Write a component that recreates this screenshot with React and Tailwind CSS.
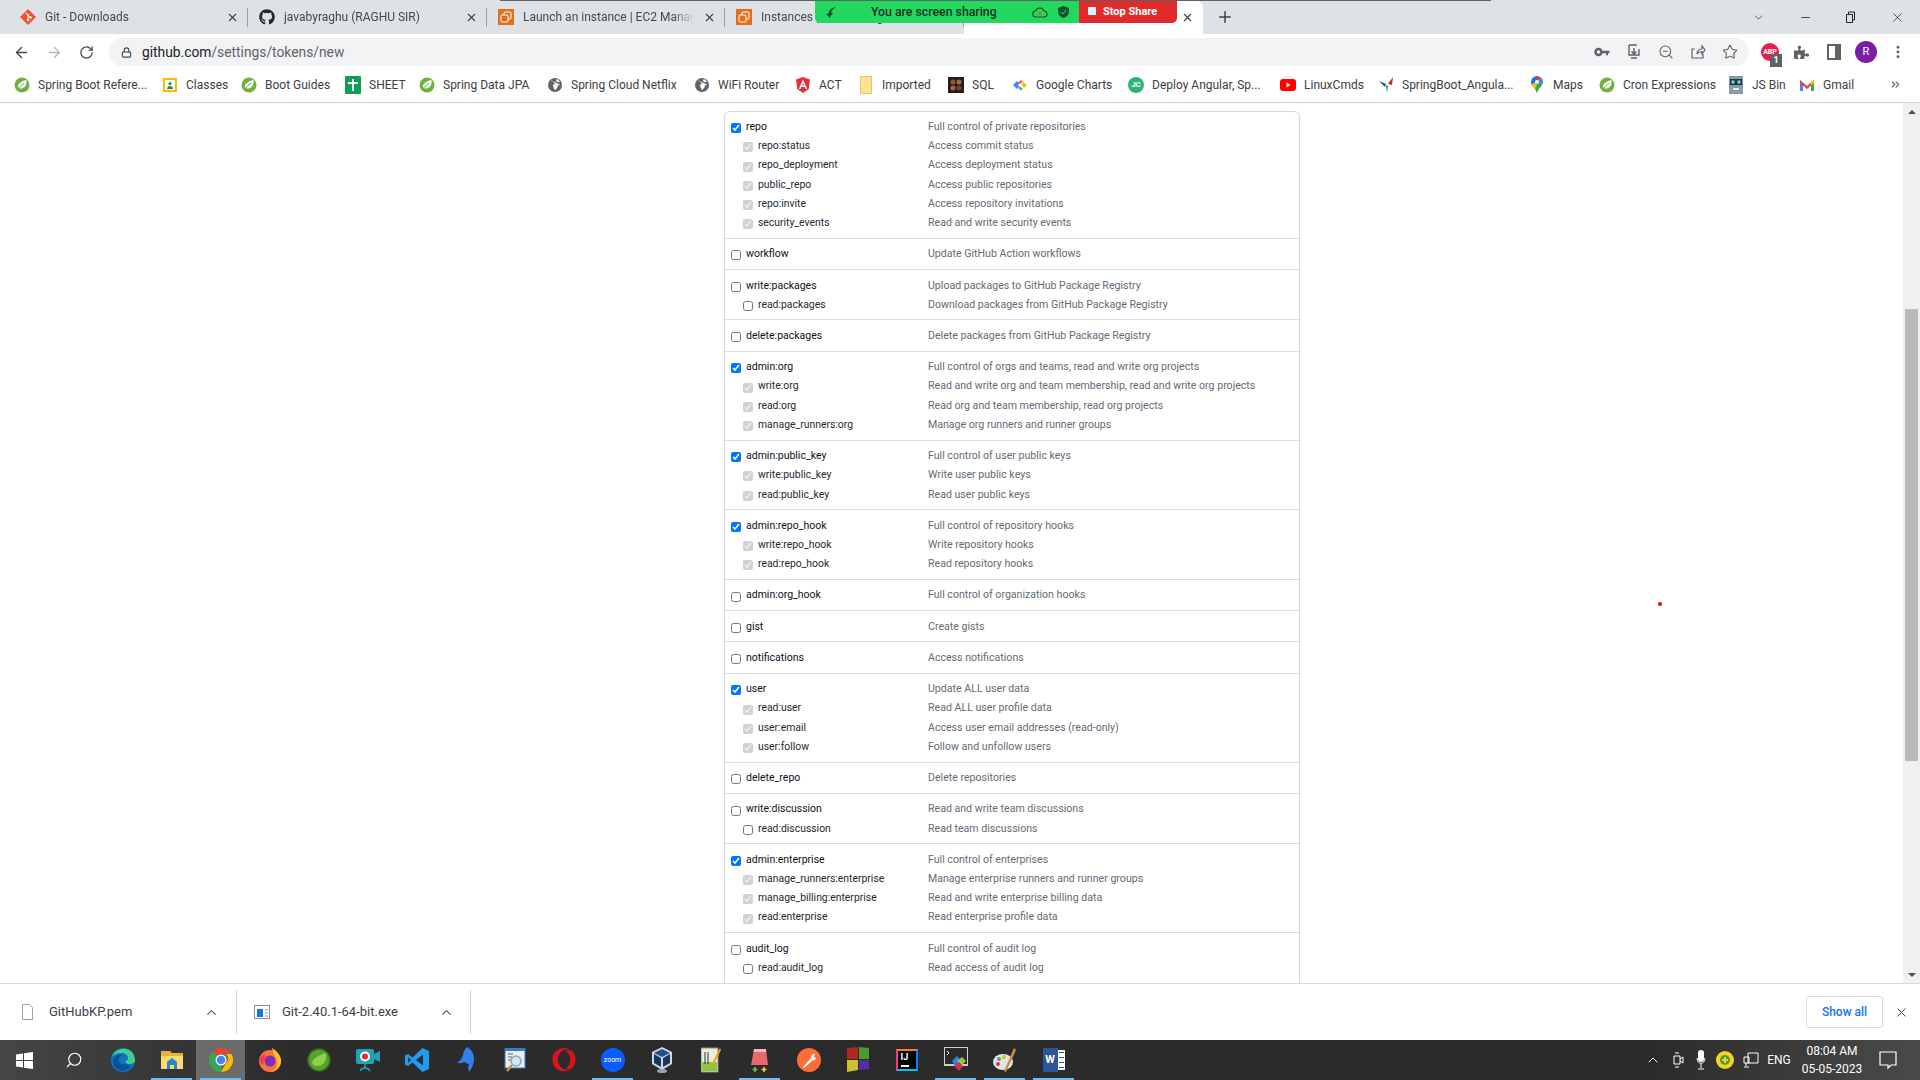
import React from 'react';
import {
  ArrowLeft, ArrowRight, RotateCw, Lock, ZoomOut, Star, MoreVertical, ChevronUp, ChevronDown,
  Minus, X, Plus, ChevronsRight, Search,
} from 'lucide-react';
import { FaGithub, FaPuzzlePiece, FaOpera } from 'react-icons/fa';

const Leaf = ({ size = 16 }) => (
  <svg width={size} height={size} viewBox="0 0 16 16" className="shrink-0">
    <circle cx="8" cy="8" r="7.5" fill="#6db33f" />
    <path d="M12.5 3c.5 4-1 8-5 8.500-1.500.2-3-.5-3.500-1.500C3.500 7 7 4.500 12.500 3z" fill="#fff" />
    <path d="M4 12.500C6 9 8 7.500 10.500 6" stroke="#6db33f" strokeWidth="1" fill="none" />
  </svg>
);

const Globe = () => (
  <svg width="16" height="16" viewBox="0 0 16 16" className="shrink-0">
    <circle cx="8" cy="8" r="7" fill="#5f6368" />
    <path d="M4 3.500l3 1.500 1 2-2 1 1 3 1 2 2-2 1-3 2-.500M10 2l-1 2 2 1 2-.500" fill="#fff" stroke="#fff" strokeWidth=".4" />
  </svg>
);

const Classes = () => (
  <svg width="16" height="16" viewBox="0 0 16 16" className="shrink-0">
    <rect x="1" y="1" width="14" height="14" fill="#fbbc04" />
    <rect x="3" y="3" width="10" height="10" fill="#fff" />
    <circle cx="8" cy="6.500" r="1.500" fill="#1e8e3e" />
    <path d="M5 12c0-2 1.500-3 3-3s3 1 3 3z" fill="#1e8e3e" />
  </svg>
);

const Sheet = () => (
  <svg width="16" height="18" viewBox="0 0 16 18" className="shrink-0">
    <rect width="16" height="18" rx="1" fill="#0f9d58" />
    <path d="M8 3v12M3 7h10" stroke="#fff" strokeWidth="1.800" />
  </svg>
);

const Angular = () => (
  <svg width="16" height="16" viewBox="0 0 16 16" className="shrink-0">
    <path d="M8 0l7 2.500-1.200 9.500L8 16l-5.800-4L1 2.500z" fill="#e23237" />
    <path d="M8 2.500L3.800 12h1.600l.8-2h3.600l.8 2h1.600zM7 8.500l1-2.500 1 2.500z" fill="#fff" />
  </svg>
);

const Folder = () => <span className="w-[12px] h-[18px] mx-[2px] shrink-0 bg-[#fde293] border border-[#e8c76a]" />;

const SqlIcon = () => (
  <svg width="16" height="16" viewBox="0 0 16 16" className="shrink-0">
    <rect width="16" height="16" fill="#2a1d17" />
    <circle cx="5" cy="5" r="2.500" fill="#8a5a3c" />
    <circle cx="11" cy="5" r="2.500" fill="#a06c48" />
    <circle cx="5" cy="11" r="2.500" fill="#a06c48" />
    <circle cx="11" cy="11" r="2.500" fill="#6e4630" />
  </svg>
);

const Charts = () => (
  <svg width="16" height="16" viewBox="0 0 16 16" className="shrink-0">
    <path d="M1 8l4-4 2.500 2.500L6 8l1.500 1.500L5 12z" fill="#4285f4" />
    <path d="M6.500 5.500L9 3l1.500 1.500L8 7z" fill="#ea4335" />
    <path d="M11 4.500L15 8l-3 3-2.500-3z" fill="#fbbc04" />
    <path d="M8 9.500L10.500 12 9 13.500 6.500 11z" fill="#34a853" />
  </svg>
);

const Deploy = () => (
  <span className="w-[16px] h-[16px] shrink-0 rounded-full bg-[#2bb673] text-white text-[8px] font-bold leading-[16px] text-center">JC</span>
);

const Youtube = () => (
  <svg width="16" height="16" viewBox="0 0 16 16" className="shrink-0">
    <rect y="2" width="16" height="12" rx="3" fill="#ff0000" />
    <path d="M6.500 5.500v5l4-2.500z" fill="#fff" />
  </svg>
);

const ArrowLogo = () => (
  <svg width="16" height="16" viewBox="0 0 16 16" className="shrink-0">
    <path d="M15 0l-5 7 4 1z" fill="#c62828" />
    <path d="M1 4l7 3-1 3z" fill="#0d5c7a" />
    <path d="M8 8l2 1-1 7z" fill="#1f7a8c" />
  </svg>
);

const Maps = () => (
  <svg width="16" height="18" viewBox="0 0 16 18" className="shrink-0">
    <path d="M8 0a6 6 0 00-6 6c0 1 .3 2 .8 2.800L8 5z" fill="#1a73e8" />
    <path d="M8 0c2 0 3.500 1 4.500 2L8 6z" fill="#ea4335" />
    <path d="M12.500 2A6 6 0 0114 6c0 1-.3 2-.8 2.800L8 6z" fill="#4285f4" />
    <path d="M2.800 8.800L8 5l5.200 3.800c-1.200 2-4.200 4-5.200 9-1-5-4-7-5.200-9z" fill="#34a853" />
    <path d="M2.800 8.800L6 6.500 8 9.500l-2 3.500c-1-1.500-2.400-2.800-3.200-4.200z" fill="#fbbc04" />
    <circle cx="8" cy="6" r="2" fill="#fff" />
  </svg>
);

const JsBin = () => (
  <svg width="14" height="18" viewBox="0 0 14 18" className="shrink-0 mx-[1px]">
    <rect width="14" height="18" fill="#8a9aa5" />
    <rect x="1" y="3" width="12" height="6" fill="#24343f" />
    <rect x="2.500" y="4.500" width="3" height="3" fill="#7fd7f2" />
    <rect x="8.500" y="4.500" width="3" height="3" fill="#7fd7f2" />
    <rect x="4" y="12" width="6" height="2" fill="#dfe5e8" />
  </svg>
);

const Gmail = () => (
  <svg width="16" height="16" viewBox="0 0 16 16" className="shrink-0">
    <path d="M1 3v11h3V7z" fill="#4285f4" />
    <path d="M15 3v11h-3V7z" fill="#34a853" />
    <path d="M1 3l7 6 7-6v3L8 12 1 6z" fill="#ea4335" />
    <path d="M12 4.500L15 3v3l-3 2.500z" fill="#fbbc04" />
  </svg>
);

const bookmarks = [
  { icon: <Leaf />, label: 'Spring Boot Refere...', w: 'w-[148px]' },
  { icon: <Classes />, label: 'Classes', w: 'w-[79px]' },
  { icon: <Leaf />, label: 'Boot Guides', w: 'w-[104px]' },
  { icon: <Sheet />, label: 'SHEET', w: 'w-[74px]' },
  { icon: <Leaf />, label: 'Spring Data JPA', w: 'w-[128px]' },
  { icon: <Globe />, label: 'Spring Cloud Netflix', w: 'w-[147px]' },
  { icon: <Globe />, label: 'WiFi Router', w: 'w-[101px]' },
  { icon: <Angular />, label: 'ACT', w: 'w-[63px]' },
  { icon: <Folder />, label: 'Imported', w: 'w-[90px]' },
  { icon: <SqlIcon />, label: 'SQL', w: 'w-[64px]' },
  { icon: <Charts />, label: 'Google Charts', w: 'w-[116px]' },
  { icon: <Deploy />, label: 'Deploy Angular, Sp...', w: 'w-[152px]' },
  { icon: <Youtube />, label: 'LinuxCmds', w: 'w-[98px]' },
  { icon: <ArrowLogo />, label: 'SpringBoot_Angula...', w: 'w-[151px]' },
  { icon: <Maps />, label: 'Maps', w: 'w-[70px]' },
  { icon: <Leaf />, label: 'Cron Expressions', w: 'w-[129px]' },
  { icon: <JsBin />, label: 'JS Bin', w: 'w-[71px]' },
  { icon: <Gmail />, label: 'Gmail', w: 'w-[90px]' },
];

const scopes = [
  [['repo', 'Full control of private repositories', true],
    ['repo:status', 'Access commit status'], ['repo_deployment', 'Access deployment status'],
    ['public_repo', 'Access public repositories'], ['repo:invite', 'Access repository invitations'],
    ['security_events', 'Read and write security events']],
  [['workflow', 'Update GitHub Action workflows', false]],
  [['write:packages', 'Upload packages to GitHub Package Registry', false],
    ['read:packages', 'Download packages from GitHub Package Registry']],
  [['delete:packages', 'Delete packages from GitHub Package Registry', false]],
  [['admin:org', 'Full control of orgs and teams, read and write org projects', true],
    ['write:org', 'Read and write org and team membership, read and write org projects'],
    ['read:org', 'Read org and team membership, read org projects'],
    ['manage_runners:org', 'Manage org runners and runner groups']],
  [['admin:public_key', 'Full control of user public keys', true],
    ['write:public_key', 'Write user public keys'], ['read:public_key', 'Read user public keys']],
  [['admin:repo_hook', 'Full control of repository hooks', true],
    ['write:repo_hook', 'Write repository hooks'], ['read:repo_hook', 'Read repository hooks']],
  [['admin:org_hook', 'Full control of organization hooks', false]],
  [['gist', 'Create gists', false]],
  [['notifications', 'Access notifications', false]],
  [['user', 'Update ALL user data', true],
    ['read:user', 'Read ALL user profile data'], ['user:email', 'Access user email addresses (read-only)'],
    ['user:follow', 'Follow and unfollow users']],
  [['delete_repo', 'Delete repositories', false]],
  [['write:discussion', 'Read and write team discussions', false], ['read:discussion', 'Read team discussions']],
  [['admin:enterprise', 'Full control of enterprises', true],
    ['manage_runners:enterprise', 'Manage enterprise runners and runner groups'],
    ['manage_billing:enterprise', 'Read and write enterprise billing data'],
    ['read:enterprise', 'Read enterprise profile data']],
  [['audit_log', 'Full control of audit log', false], ['read:audit_log', 'Read access of audit log']],
];

const ScopeGroup = ({ rows }) => {
  const parentChecked = rows[0][2];
  return (
    <div className="border-b border-[#d8dee4] pt-[5.550px] pb-[5.550px] pl-[6px]">
      {rows.map(([name, desc], i) => (
        <div key={name} className="grid grid-cols-[197px_1fr] h-[19.200px] items-center leading-[19.200px]">
          <label className={i === 0 ? 'flex items-center gap-[5px] text-[#0d1117] text-[10.500px]' : 'flex items-center gap-[5px] pl-[12px] text-[#24292f] text-[10.400px]'}>
            <input
              type="checkbox"
              readOnly
              checked={parentChecked}
              disabled={i > 0 && parentChecked}
              className="w-[10px] h-[10px] m-0 mt-[3px] shrink-0"
            />
            <span>{name}</span>
          </label>
          <span className="text-[#636b74] text-[10.600px]">{desc}</span>
        </div>
      ))}
    </div>
  );
};

const AwsIcon = () => (
  <svg width="16" height="16" viewBox="0 0 16 16" className="shrink-0">
    <rect width="16" height="16" fill="#e0701a" />
    <rect x="6" y="3" width="7" height="7" rx="1" fill="none" stroke="#fff" strokeWidth="1" />
    <rect x="3" y="6" width="7" height="7" rx="1" fill="#e0701a" stroke="#fff" strokeWidth="1" />
  </svg>
);

const GitIcon = () => (
  <svg width="16" height="16" viewBox="0 0 16 16" className="shrink-0">
    <path d="M8 0l8 8-8 8-8-8z" fill="#f05133" />
    <path d="M5.500 3.500L10.500 8.500M8 6v6" stroke="#fff" strokeWidth="1" />
    <circle cx="8" cy="6" r="1.200" fill="#fff" />
    <circle cx="8" cy="11" r="1.200" fill="#fff" />
    <circle cx="10.500" cy="8.500" r="1.200" fill="#fff" />
  </svg>
);

const tabs = [
  { icon: <GitIcon />, title: 'Git - Downloads', w: 'w-[239px] ml-[9px]' },
  { icon: <FaGithub size={16} color="#24292f" className="shrink-0" />, title: 'javabyraghu (RAGHU SIR)', w: 'w-[239px]' },
  { icon: <AwsIcon />, title: 'Launch an instance | EC2 Management Console', w: 'w-[238px]' },
  { icon: <AwsIcon />, title: 'Instances | EC2 Management Console', w: 'w-[239px]' },
];

const Tab = ({ icon, title, w }) => (
  <div className={`${w} h-[34px] flex items-center pl-[11px] pr-[9px] gap-[9px] relative`}>
    {icon}
    <span className="flex-1 min-w-0 whitespace-nowrap overflow-hidden text-[12px] text-[#45484c] [mask-image:linear-gradient(to_right,black_88%,transparent)]">{title}</span>
    <X size={13} strokeWidth={2} className="text-[#3c4043] shrink-0" />
    <span className="absolute right-0 top-[8px] h-[19px] w-px bg-[#9aa0a6]" />
  </div>
);

const TabStrip = () => (
  <div className="h-[34px] bg-[#dee1e6] flex shrink-0 relative">
    {tabs.map((t) => <Tab key={t.title} {...t} />)}
    <div className="w-[239px] h-[34px] bg-white rounded-t-lg flex items-center justify-end pr-[9px]">
      <X size={13} strokeWidth={2} className="text-[#3c4043]" />
    </div>
    <div className="w-[44px] flex items-center justify-center">
      <Plus size={18} strokeWidth={2} className="text-[#3c4043]" />
    </div>
    <div className="flex-1 flex items-center justify-end">
      <ChevronDown size={13} strokeWidth={1.500} className="text-[#3c4043] mr-[34px]" />
      <Minus size={13} strokeWidth={1.500} className="text-[#222] mr-[32px]" />
      <svg width="12" height="12" viewBox="0 0 12 12" className="mr-[34px]">
        <path d="M2.500 3.500h6v8h-6zM4.500 3.500v-2.500h6v8h-2" fill="none" stroke="#222" strokeWidth="1" />
      </svg>
      <X size={15} strokeWidth={1.200} className="text-[#222] mr-[15px]" />
    </div>
    <div className="absolute left-[500px] top-0 w-[991px] h-px bg-[#5f6368]" />
    <div className="absolute left-[815px] top-px w-[362px] h-[22px] rounded-b-[5px] overflow-hidden flex text-[12.300px] font-medium whitespace-nowrap">
      <div className="w-[264px] bg-[#22d85f] flex items-center pl-[11px] text-[#17321f]">
        <svg width="11" height="11" viewBox="0 0 11 11" className="shrink-0"><path d="M10 0C5 1 3 3 3 6L0 7l4 4c0-2 1-3 3-4L5 5c1-2 3-3 5-5z" fill="#14532d" /></svg>
        <span className="ml-[34px] w-[125px] shrink-0">You are screen sharing</span>
        <svg width="16" height="11" viewBox="0 0 16 11" className="ml-[36px] shrink-0">
          <path d="M4 10a3 3 0 01-.5-6A4.500 4.500 0 0112 4a3 3 0 010 6z" fill="none" stroke="#14532d" strokeWidth="1.200" />
          <circle cx="8" cy="6.500" r="1.500" fill="#ef4444" />
        </svg>
        <svg width="11" height="12" viewBox="0 0 11 12" className="ml-[10px] shrink-0"><path d="M5.500 0L11 2v4c0 3-2.500 5-5.500 6C2.500 11 0 9 0 6V2z" fill="#14532d" /><path d="M3 6l2 2 3-4" stroke="#22d85f" fill="none" /></svg>
      </div>
      <div className="flex-1 bg-[#e12a2a] flex items-center pl-[9px] text-white">
        <span className="w-[8px] h-[8px] bg-[#d8f3ff] mr-[7px] mb-[3px]" />
        <span className="font-bold text-[11px]">Stop Share</span>
      </div>
    </div>
  </div>
);

const Toolbar = () => (
  <div className="h-[36px] bg-white flex items-center shrink-0 text-[#5f6368]">
    <ArrowLeft size={17} strokeWidth={2} className="ml-[13px] text-[#45484c]" />
    <ArrowRight size={17} strokeWidth={2} className="ml-[16px] text-[#b4b7bb]" />
    <RotateCw size={15} strokeWidth={2} className="ml-[16px] text-[#45484c]" />
    <div className="ml-[15px] w-[1640px] h-[28px] rounded-full bg-[#f1f3f4] flex items-center pl-[12px]">
      <Lock size={11} strokeWidth={2.500} className="text-[#45484c]" />
      <span className="ml-[10px] text-[13.800px] text-[#202124]">github.com<span className="text-[#5f6368]">/settings/tokens/new</span></span>
      <div className="ml-auto flex items-center gap-[16px] pr-[11px] text-[#5f6368]">
        <svg width="16" height="12" viewBox="0 0 16 12"><circle cx="4.500" cy="6" r="3" fill="none" stroke="#5f6368" strokeWidth="2.500" /><path d="M7 4.800h8.500v2.400H14v2h-2v-2H7z" fill="#5f6368" /></svg>
        <svg width="16" height="16" viewBox="0 0 16 16"><path d="M3 1h7v1M3 1v10h10V5M8 4v6M5.500 7.500L8 10l2.500-2.500M5 14h6" fill="none" stroke="#5f6368" strokeWidth="1.400" /></svg>
        <ZoomOut size={16} strokeWidth={1.600} />
        <svg width="16" height="16" viewBox="0 0 16 16"><path d="M13 10v4H2V5h3M7 10c0-4 2-5 5-5V2l3 4-3 4V7.500c-2 0-4 .5-5 2.500z" fill="none" stroke="#5f6368" strokeWidth="1.200" /></svg>
        <Star size={16} strokeWidth={1.600} />
      </div>
    </div>
    <div className="ml-[12px] relative w-[18px] h-[18px] rounded-full bg-[#e81e4a] text-white text-[7px] font-bold leading-[18px] text-center">
      ABP
      <span className="absolute left-[9px] top-[11px] w-[12px] h-[13px] bg-[#5f6368] text-[9px] leading-[13px]">1</span>
    </div>
    <FaPuzzlePiece size={15} className="ml-[15px]" />
    <svg width="14" height="16" viewBox="0 0 14 16" className="ml-[18px]"><path d="M1 1h12v14H1z" fill="none" stroke="#5f6368" strokeWidth="2" /><path d="M8 1h5v14H8z" fill="#5f6368" /></svg>
    <div className="ml-[14px] w-[22px] h-[22px] rounded-full bg-[#7b1fa2] text-white text-[11px] leading-[22px] text-center">R</div>
    <MoreVertical size={16} strokeWidth={2.400} className="ml-[13px]" />
  </div>
);

const BookmarkBar = () => (
  <div className="h-[33px] bg-white border-b border-[#d0d2d5] flex items-center pl-[14px] pb-[3px] shrink-0 text-[12px] text-[#3c4043]">
    {bookmarks.map((b) => (
      <div key={b.label} className={`${b.w} flex items-center gap-[8px] shrink-0 whitespace-nowrap`}>
        {b.icon}
        <span>{b.label}</span>
      </div>
    ))}
    <ChevronsRight size={13} className="text-[#5f6368]" />
  </div>
);

const Scrollbar = () => (
  <div className="w-[17px] bg-[#f0f0f0] flex flex-col items-center shrink-0">
    <div className="h-[17px] flex items-center justify-center">
      <span className="w-0 h-0 border-x-[4px] border-x-transparent border-b-[4px] border-b-[#505050]" />
    </div>
    <div className="mt-[189px] h-[452px] w-[13px] bg-[#bababa]" />
    <div className="mt-auto h-[17px] flex items-center justify-center">
      <span className="w-0 h-0 border-x-[4px] border-x-transparent border-t-[4px] border-t-[#505050]" />
    </div>
  </div>
);

const Downloads = () => (
  <div className="h-[57px] bg-white border-t border-[#d8d9da] flex items-center shrink-0 text-[13px] text-[#3c4043]">
    <div className="w-[237px] h-[44px] border-r border-[#d0d2d5] flex items-center pl-[22px]">
      <svg width="11" height="16" viewBox="0 0 11 16"><path d="M.5.5h7l3 3v12H.5z" fill="#fff" stroke="#9aa0a6" /></svg>
      <span className="ml-[16px]">GitHubKP.pem</span>
      <ChevronUp size={15} strokeWidth={2} className="ml-auto mr-[17px] text-[#5f6368]" />
    </div>
    <div className="w-[234px] h-[44px] border-r border-[#d0d2d5] flex items-center pl-[17px]">
      <svg width="16" height="14" viewBox="0 0 16 14"><rect x=".5" y=".5" width="15" height="13" fill="#fff" stroke="#8a8f94" /><rect x="3" y="4" width="6" height="8" fill="#1a73e8" /><path d="M11 5h3M11 8h3M11 11h3" stroke="#8a8f94" /></svg>
      <span className="ml-[12px]">Git-2.40.1-64-bit.exe</span>
      <ChevronUp size={15} strokeWidth={2} className="ml-auto mr-[16px] text-[#5f6368]" />
    </div>
    <div className="ml-auto w-[77px] h-[32px] mr-[11px] rounded-[3px] border border-[#dadce0] text-[#1a73e8] font-medium text-[12px] flex items-center justify-center">Show all</div>
    <X size={15} strokeWidth={1.600} className="mr-[11px] text-[#45484c]" />
  </div>
);

const ChromeIcon = () => (
  <svg width="24" height="24" viewBox="0 0 24 24">
    <path d="M12 0a12 12 0 0110.400 6H12a6 6 0 00-5.200 3L3.200 3.800A12 12 0 0112 0z" fill="#ea4335" />
    <path d="M22.400 6A12 12 0 0112 24l5.200-9a6 6 0 000-9z" fill="#fbbc04" />
    <path d="M12 24A12 12 0 013.200 3.800L6.800 15a6 6 0 005.200 3z" fill="#34a853" />
    <path d="M3.200 3.800l7 5.200L6.800 15z" fill="#34a853" />
    <circle cx="12" cy="12" r="5.500" fill="#fff" />
    <circle cx="12" cy="12" r="4.300" fill="#4285f4" />
  </svg>
);

const taskIcons = [
  { key: 'win', el: <svg width="17" height="17" viewBox="0 0 17 17"><path d="M0 2.500l7-1v6.500H0zM8 1.300L17 0v8H8zM0 9h7v6.500l-7-1zM8 9h9v8l-9-1.300z" fill="#fff" /></svg> },
  { key: 'search', el: <Search size={18} strokeWidth={1.500} color="#fff" className="-scale-x-100" /> },
  { key: 'edge', el: <svg width="24" height="24" viewBox="0 0 24 24"><circle cx="12" cy="12" r="12" fill="#0c74c4" /><path d="M1 9C3 2 12-1 18 2c4 2 6 6 6 11 0 2-3 3-6 3-2 0-4-1-4-3 2 0 3-1 3-3 0-3-3-5-7-5-4 0-8 2-9 4z" fill="#3fcf8e" /><path d="M14 13c0 3 3 5 6 5-3 4-8 6-12 4-5-2-7-8-5-12 2-3 6-4 9-3-4 1-5 4-4 7 1 2 3 3 6 2z" fill="#0a4f97" /></svg> },
  { key: 'explorer', line: true, el: <svg width="22" height="22" viewBox="0 0 22 22"><path d="M0 2h9l2 2h11v16H0z" fill="#e8b23e" /><path d="M0 7h22v13H0z" fill="#fbd96b" /><path d="M6 13l5-4 5 4v7h-3v-4H9v4H6z" fill="#1f8ad6" /></svg> },
  { key: 'chrome', active: true, line: true, el: <ChromeIcon /> },
  { key: 'firefox', el: <svg width="24" height="24" viewBox="0 0 24 24"><circle cx="12" cy="13" r="11" fill="#ff7139" /><path d="M14 0c5 3 9 8 9 13 0 6-5 11-11 11 6-2 8-6 7-11-1-4-4-7-5-13z" fill="#ffbd2e" /><circle cx="12" cy="13" r="5.500" fill="#7b2fbf" /><path d="M1 13c1-4 3-6 6-7-1 2 0 3 2 4-3 1-4 3-3 7-2-1-4-2-5-4z" fill="#ff3750" /></svg> },
  { key: 'sts', el: <svg width="24" height="24" viewBox="0 0 24 24"><circle cx="12" cy="12" r="11" fill="#5aa02c" stroke="#2e6b1e" strokeWidth="2" strokeDasharray="2 1" /><path d="M19 5c1 7-2 13-9 13-3 0-4-1-5-3C6 10 12 7 19 5z" fill="#8fd14f" /></svg> },
  { key: 'cam', el: <svg width="24" height="24" viewBox="0 0 24 24"><rect x="0" y="1" width="18" height="15" rx="2" fill="#1fa3b5" /><path d="M18 6l6-3v11l-6-3z" fill="#1fa3b5" /><circle cx="9" cy="8.500" r="5" fill="#fff" /><circle cx="9" cy="8.500" r="3" fill="#d92d3a" /><path d="M9 16v4M4 23c1-2 3-3 5-3s4 1 5 3" stroke="#1fa3b5" strokeWidth="1.500" fill="none" /></svg> },
  { key: 'vscode', el: <svg width="24" height="24" viewBox="0 0 24 24"><path d="M17.500 0L24 3v18l-6.500 3-10-9.500L3 18l-3-1.500v-9L3 6l4.500 3.500zM18 6.500L11 12l7 5.500z" fill="#1f9cf0" /><path d="M3 9v6l3-3z" fill="#2b2b2b" /></svg> },
  { key: 'dolphin', el: <svg width="20" height="26" viewBox="0 0 20 26"><path d="M11 0c4 2 7 6 7 12 0 5-2 9-5 13-1-3-1-5 0-8-2 0-3-1-4-2-2 1-5 1-8 1 3-2 5-5 6-8 0-3 2-6 4-8z" fill="#2f80ed" /></svg> },
  { key: 'mag', el: <svg width="22" height="24" viewBox="0 0 22 24"><rect x="1" y="0" width="20" height="20" fill="#e8eef5" stroke="#3a7bc8" /><rect x="1" y="0" width="20" height="3" fill="#3a7bc8" /><path d="M4 6h5M4 9h4M4 12h3" stroke="#5f6368" /><circle cx="12" cy="13" r="5" fill="#cfe8f7" stroke="#8fa6b5" strokeWidth="1.500" /><path d="M8 17l-5 6" stroke="#c9903f" strokeWidth="2.500" /></svg> },
  { key: 'opera', el: <FaOpera size={24} color="#d9141e" /> },
  { key: 'zoom', line: true, el: <div className="w-[24px] h-[24px] rounded-full bg-[#0b5cff] text-white text-[7px] leading-[24px] text-center">zoom</div> },
  { key: 'vbox', el: <svg width="20" height="26" viewBox="0 0 20 26"><path d="M10 0l10 5v12l-10 6L0 17V5z" fill="#cfd8e3" /><path d="M10 2l8 4-8 4-8-4z" fill="#1d4f8a" /><path d="M2 7l7 4v9l-7-4zM18 7l-7 4v9l7-4z" fill="#16365e" /><ellipse cx="10" cy="24" rx="5" ry="2" fill="#8fa6b5" /></svg> },
  { key: 'np', el: <svg width="20" height="26" viewBox="0 0 20 26"><rect x="0" y="1" width="17" height="24" fill="#e8efd8" stroke="#8a8f80" /><rect x="1" y="15" width="15" height="9" fill="#8cc63f" /><path d="M4 5v12M7 5v12" stroke="#333" /><path d="M19 1l-8 15-1 3 3-2 7-14z" fill="#f2a01e" /></svg> },
  { key: 'notes', line: true, el: <svg width="24" height="26" viewBox="0 0 24 26"><path d="M6 2h12l2 16H3z" fill="#e8696b" /><path d="M6 2h12v3H5.500z" fill="#f4b6b6" /><path d="M7 20v5M4.500 22.500h5" stroke="#7ac143" strokeWidth="1.600" /><path d="M16 20v5M13.500 22.500h5" stroke="#f3d32b" strokeWidth="1.600" /></svg> },
  { key: 'postman', el: <svg width="24" height="24" viewBox="0 0 24 24"><circle cx="12" cy="12" r="12" fill="#ff6c37" /><path d="M6 19l8-9 2 2-9 8zM14 9a3 3 0 014-3l-1 3 2 1a3 3 0 01-4 2z" fill="#fff" /></svg> },
  { key: 'msi', el: <svg width="22" height="26" viewBox="0 0 22 26"><path d="M0 1l11-1v12H0z" fill="#b3261e" /><path d="M12 0l10 1v11H12z" fill="#4a9c2d" /><path d="M0 13h11v10L0 25z" fill="#c9c22d" /><path d="M12 13h10v9l-10 1z" fill="#5b2ca0" /></svg> },
  { key: 'ij', el: <div className="w-[22px] h-[22px] border-2 border-l-[#fc318c] border-t-[#fe7b2a] border-r-[#087cfa] border-b-[#07c3f2] bg-black text-white text-[9px] font-bold leading-[12px] pl-[3px]">IJ<div className="w-[8px] h-[2px] bg-white mt-[2px]" /></div> },
  { key: 'term', line: true, el: <svg width="24" height="26" viewBox="0 0 24 26"><rect x="0" y="0" width="24" height="18" fill="#2b2b2b" stroke="#cfcfcf" strokeWidth="2" /><path d="M3 4l2 2-2 2" stroke="#fff" fill="none" /><path d="M8 14l5-5 4 4-6 6z" fill="#2f80ed" /><path d="M13 14l5-4 4 4-5 5z" fill="#9ac43a" /><path d="M10 19l5-4 4 4-4 5z" fill="#d9304f" /></svg> },
  { key: 'paint', line: true, el: <svg width="24" height="26" viewBox="0 0 24 26"><ellipse cx="10" cy="15" rx="10" ry="8" fill="#dfe6ea" /><circle cx="6" cy="12" r="2" fill="#4caf50" /><circle cx="11" cy="10" r="2" fill="#f4b400" /><circle cx="5" cy="17" r="2" fill="#e53935" /><path d="M21 1l2 2-10 22-2-1z" fill="#c9903f" /></svg> },
  { key: 'word', line: true, el: <div className="w-[22px] h-[24px] flex"><div className="w-[15px] bg-[#2b579a] text-white text-[11px] font-bold leading-[24px] text-center">W</div><div className="w-[7px] my-[2px] bg-white flex flex-col justify-around px-px"><span className="h-px bg-[#2b579a]" /><span className="h-px bg-[#2b579a]" /><span className="h-px bg-[#2b579a]" /><span className="h-px bg-[#2b579a]" /></div></div> },
];

const Taskbar = () => (
  <div className="h-[40px] shrink-0 flex items-center bg-[linear-gradient(to_right,#454545_0,#2b2b2b_300px,#2b2b2b_1650px,#4a4a4a_1920px)]">
    {taskIcons.map((t) => (
      <div key={t.key} className={t.active ? 'w-[49px] h-[40px] relative flex items-center justify-center bg-[#6b6b6b]' : 'w-[49px] h-[40px] relative flex items-center justify-center'}>
        {t.el}
        {t.line && <span className="absolute bottom-0 left-[4px] right-[4px] h-[2px] bg-[#76b9ed]" />}
      </div>
    ))}
    <div className="ml-auto flex items-center text-white text-[12px] whitespace-nowrap">
      <ChevronUp size={16} strokeWidth={1.500} />
      <svg width="12" height="18" viewBox="0 0 12 18" className="ml-[11px]"><path d="M2 5h6v8H2zM8 8l3-2v6l-3-2M3 2h4M3 16h4" fill="none" stroke="#fff" /></svg>
      <svg width="10" height="20" viewBox="0 0 10 20" className="ml-[12px]"><rect x="2" y="0" width="6" height="12" rx="3" fill="#fff" /><path d="M1 8c0 7 8 7 8 0M5 14v4M2 19h6" stroke="#fff" fill="none" /></svg>
      <svg width="18" height="18" viewBox="0 0 18 18" className="ml-[10px]"><circle cx="9" cy="9" r="9" fill="#f5d327" /><circle cx="9" cy="9" r="5" fill="#4c9c2e" /><path d="M9 6v6M6 9h6" stroke="#f5d327" strokeWidth="2" /></svg>
      <svg width="16" height="16" viewBox="0 0 16 16" className="ml-[9px]"><path d="M5 1h10v10H5zM1 5h5v6H1zM3 11v3M1 15h5" fill="none" stroke="#fff" /></svg>
      <span className="ml-[7px] w-[26px] text-center">ENG</span>
      <div className="ml-[9px] w-[62px] text-center leading-[18px]">
        <div>08:04 AM</div>
        <div>05-05-2023</div>
      </div>
      <svg width="18" height="20" viewBox="0 0 18 20" className="ml-[16px] mr-[23px]"><path d="M1 2h16v13h-5l-3 3v-3H1z" fill="none" stroke="#fff" strokeWidth="1.200" /></svg>
    </div>
  </div>
);

export default function App() {
  return (
    <div className="h-screen w-full flex flex-col overflow-hidden relative bg-white font-['Roboto',sans-serif]">
      <TabStrip />
      <Toolbar />
      <BookmarkBar />
      <div className="flex-1 min-h-0 flex">
        <div className="flex-1 min-w-0 overflow-hidden pt-[7.500px]">
          <div className="ml-[724px] w-[576px] border border-[#d0d7de] rounded-t-md">
            {scopes.map((rows) => <ScopeGroup key={rows[0][0]} rows={rows} />)}
          </div>
        </div>
        <Scrollbar />
      </div>
      <Downloads />
      <Taskbar />
      <span className="absolute left-[1658px] top-[602px] w-[4px] h-[4px] rounded-full bg-[#e01010]" />
    </div>
  );
}
